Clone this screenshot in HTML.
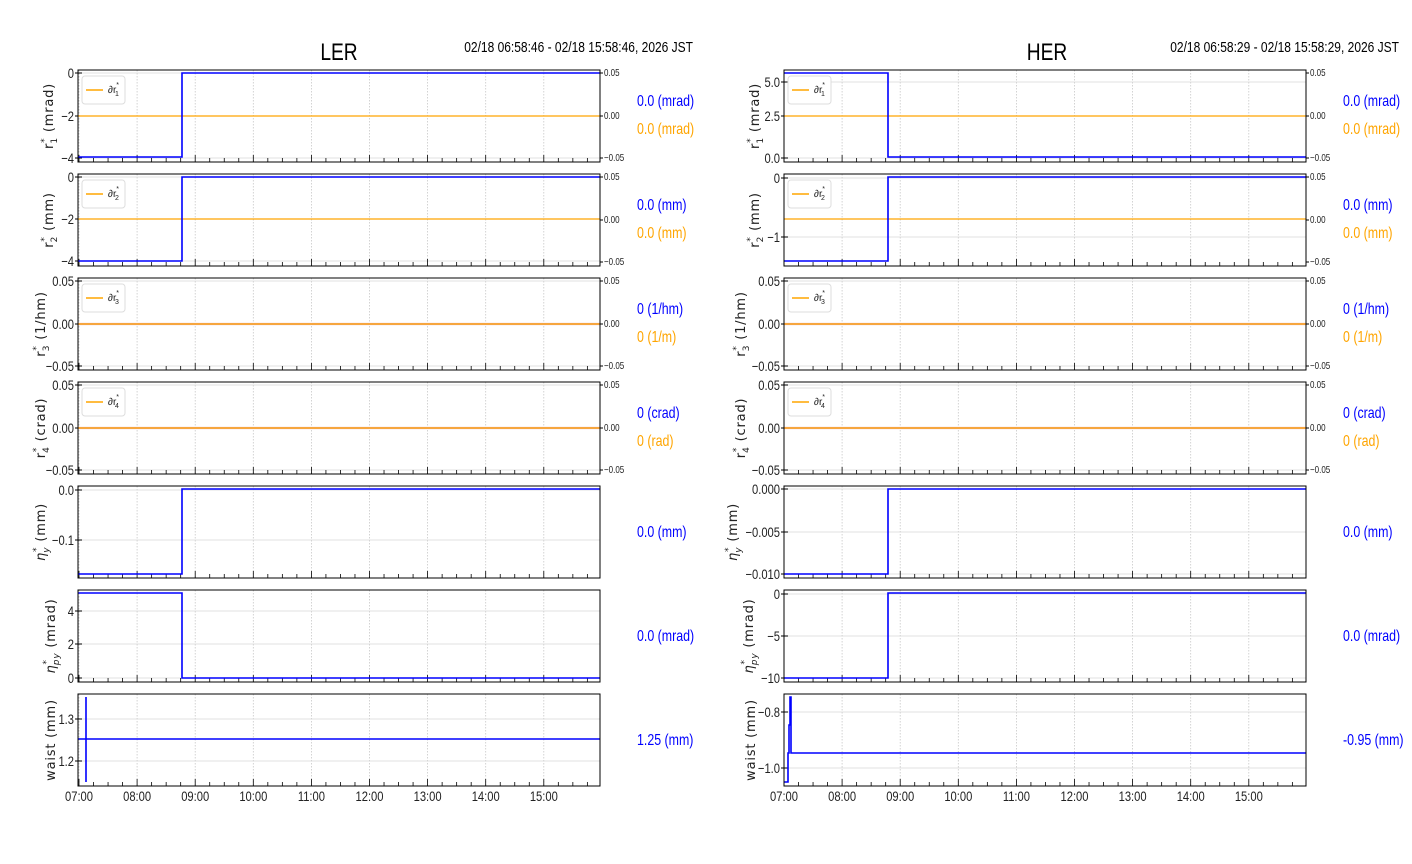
<!DOCTYPE html>
<html><head><meta charset="utf-8"><style>
html,body{margin:0;padding:0;background:#fff;width:1412px;height:864px;overflow:hidden}
svg text{font-family:"Liberation Sans",sans-serif}
.yl{font-family:"DejaVu Sans","Liberation Sans",sans-serif;font-size:13px;fill:#222;letter-spacing:0.8px}
</style></head><body>
<svg id="s" width="1412" height="864" xmlns="http://www.w3.org/2000/svg"></svg>
<script>
var S=document.getElementById('s'),h='';
function L(x1,y1,x2,y2,c,w,d){h+='<line x1="'+x1+'" y1="'+y1+'" x2="'+x2+'" y2="'+y2+'" stroke="'+c+'" stroke-width="'+w+'"'+(d?' stroke-dasharray="'+d+'"':'')+'/>';}
function T(x,y,t,sz,c,a){h+='<text transform="translate('+x+','+y+') scale(0.8,1)" font-size="'+sz+'" fill="'+c+'" text-anchor="'+(a||'start')+'">'+t+'</text>';}
function P(d,c,w){h+='<path d="'+d+'" fill="none" stroke="'+c+'" stroke-width="'+w+'"/>';}
var W=522,H=92;
var tops=[70,174,278,382,486,590,694];
function rl(n,u){return 'r<tspan dy="-6" font-size="9">*</tspan><tspan dx="-6" dy="10" font-size="9">'+n+'</tspan><tspan dy="-4"> ('+u+')</tspan>';}
function el(n,u){return '<tspan font-style="italic">η</tspan><tspan dy="-6" font-size="9">*</tspan><tspan dx="-6" dy="10" font-size="9" font-style="italic">'+n+'</tspan><tspan dy="-4"> ('+u+')</tspan>';}
var sides=[
 {x0:78,t0:79,title:'LER',tx:339,date:'02/18 06:58:46 - 02/18 15:58:46, 2026 JST',dx:693,lx:637,
  ylx:[48,48,40,40,40,50,50],
  rows:[
  {ticks:[[73,'0'],[116,'−2'],[158,'−4']],blue:'M78 157 H182 V73 H600',or:116,ra:1,yl:rl('1','mrad'),lg:'1',v1:'0.0 (mrad)',v2:'0.0 (mrad)'},
  {ticks:[[177,'0'],[219,'−2'],[261,'−4']],blue:'M78 261 H182 V177 H600',or:219,ra:1,yl:rl('2','mm'),lg:'2',v1:'0.0 (mm)',v2:'0.0 (mm)'},
  {ticks:[[281,'0.05'],[324,'0.00'],[366,'−0.05']],blue:null,or:324,ra:1,yl:rl('3','1/hm'),lg:'3',v1:'0 (1/hm)',v2:'0 (1/m)'},
  {ticks:[[385,'0.05'],[428,'0.00'],[470,'−0.05']],blue:null,or:428,ra:1,yl:rl('4','crad'),lg:'4',v1:'0 (crad)',v2:'0 (rad)'},
  {ticks:[[490,'0.0'],[540,'−0.1']],blue:'M78 574 H182 V489 H600',yl:el('y','mm'),v1:'0.0 (mm)'},
  {ticks:[[611,'4'],[644,'2'],[678,'0']],blue:'M78 593 H182 V678 H600',yl:el('py','mrad'),v1:'0.0 (mrad)'},
  {ticks:[[719,'1.3'],[761,'1.2']],blue:'M78 739 H86 V697 V782 V739 H600',yl:'waist (mm)',v1:'1.25 (mm)'}
 ]},
 {x0:784,t0:784,title:'HER',tx:1047,date:'02/18 06:58:29 - 02/18 15:58:29, 2026 JST',dx:1399,lx:1343,
  ylx:[754,754,740,740,732,748,750],
  rows:[
  {ticks:[[82,'5.0'],[116,'2.5'],[158,'0.0']],blue:'M784 73 H888 V157 H1306',or:116,ra:1,yl:rl('1','mrad'),lg:'1',v1:'0.0 (mrad)',v2:'0.0 (mrad)'},
  {ticks:[[178,'0'],[237,'−1']],blue:'M784 261 H888 V177 H1306',or:219,ra:1,yl:rl('2','mm'),lg:'2',v1:'0.0 (mm)',v2:'0.0 (mm)'},
  {ticks:[[281,'0.05'],[324,'0.00'],[366,'−0.05']],blue:null,or:324,ra:1,yl:rl('3','1/hm'),lg:'3',v1:'0 (1/hm)',v2:'0 (1/m)'},
  {ticks:[[385,'0.05'],[428,'0.00'],[470,'−0.05']],blue:null,or:428,ra:1,yl:rl('4','crad'),lg:'4',v1:'0 (crad)',v2:'0 (rad)'},
  {ticks:[[489,'0.000'],[532,'−0.005'],[574,'−0.010']],blue:'M784 574 H888 V489 H1306',yl:el('y','mm'),v1:'0.0 (mm)'},
  {ticks:[[594,'0'],[636,'−5'],[678,'−10']],blue:'M784 678 H888 V593 H1306',yl:el('py','mrad'),v1:'0.0 (mrad)'},
  {ticks:[[712,'−0.8'],[768,'−1.0']],blue:'M784 782 H788 V753 H789 V725 H790 V697 H791 V753 H1306',yl:'waist (mm)',v1:'-0.95 (mm)'}
 ]}
];
var hr=58.1;
sides.forEach(function(sd){
 T(sd.tx,60,sd.title,24,'#000','middle');
 T(sd.dx,52,sd.date,15,'#000','end');
 sd.rows.forEach(function(r,i){
  var y0=tops[i],x0=sd.x0,x1=x0+W,yb=y0+H;
  for(var k=0;k<9;k++){var gx=sd.t0+k*hr;L(gx,y0,gx,yb,'#c8c8c8',0.8,'1.5,1.5');}
  r.ticks.forEach(function(t){L(x0,t[0],x1,t[0],'#d6d6d6',0.8);L(x0,t[0],x0+4,t[0],'#000',1);L(x0-3,t[0],x0,t[0],'#000',1);T(x0-4,t[0]+5,t[1],14,'#222','end');});
  for(var k=0;k<36;k++){var mx=sd.t0+k*hr/4;if(mx>x1)break;L(mx,yb,mx,yb-(k%4==0?7:4),'#000',0.8);}
  if(r.or!==undefined){if(!r.blue)L(x0,r.or,x1,r.or,'#e8a8a8',2.2);L(x0,r.or,x1,r.or,'#ffa500',1.2);}
  if(r.blue){P(r.blue,'#0000ff',1.6);}
  if(r.lg){h+='<rect x="'+(x0+4)+'" y="'+(y0+6)+'" width="43" height="28" rx="3" fill="#fff" stroke="#ddd" stroke-width="1"/>';
   L(x0+8,y0+20,x0+25,y0+20,'#ffa500',1.5);
   h+='<text x="'+(x0+30)+'" y="'+(y0+23)+'" font-size="10" fill="#222">∂r<tspan font-size="7" dy="-6">*</tspan><tspan font-size="7" dx="-4" dy="9">'+r.lg+'</tspan></text>';}
  h+='<rect x="'+x0+'" y="'+y0+'" width="'+W+'" height="'+H+'" fill="none" stroke="#000" stroke-width="1"/>';
  if(r.ra){[[y0+3,'0.05'],[y0+46,'0.00'],[y0+88,'−0.05']].forEach(function(t){L(x1,t[0],x1+3,t[0],'#000',1);T(x1+4,t[0]+3,t[1],10,'#222');});}
  var cy=y0+H/2;
  if(r.v2){T(sd.lx,cy-10,r.v1,15.5,'#0000ff');T(sd.lx,cy+18,r.v2,15.5,'#ffa500');}
  else T(sd.lx,cy+5,r.v1,15.5,'#0000ff');
  h+='<text class="yl" transform="translate('+(sd.ylx[i]+5)+','+cy+') rotate(-90)" text-anchor="middle">'+r.yl+'</text>';
 });
 for(var k=0;k<9;k++){T(sd.t0+k*hr,801,(k+7<10?'0':'')+(k+7)+':00',14,'#222','middle');}
});
S.innerHTML=h;
</script>
</body></html>
